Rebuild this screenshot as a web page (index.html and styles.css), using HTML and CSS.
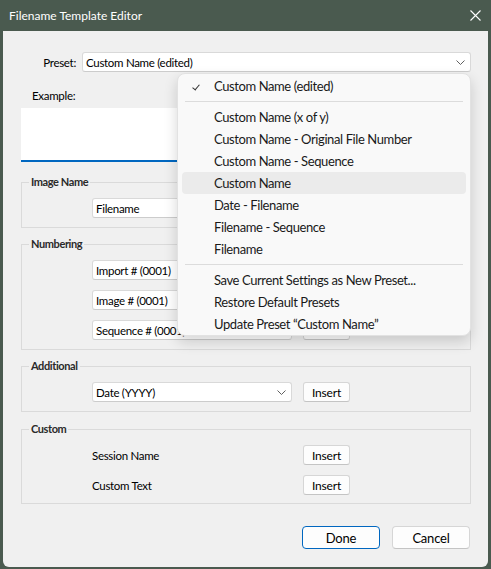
FILE: index.html
```html
<!DOCTYPE html>
<html lang="en">
<head>
    <meta charset="UTF-8">
    <title>Filename Template Editor</title>
    <link rel="stylesheet" href="styles.css">
</head>
<body>
    <div class="window">
        <div class="titlebar">
            <span class="title">Filename Template Editor</span>
            <svg class="close" width="11" height="11" viewBox="0 0 11 11">
                <path d="M0.5 0.5 L10.5 10.5 M10.5 0.5 L0.5 10.5" stroke="#ffffff" stroke-width="1.1" fill="none"/>
            </svg>
        </div>

        <div class="client">
            <div class="content">
                <div class="preset-row">
                    <label class="preset-label">Preset:</label>
                    <div class="combo combo-wide">
                        <span>Custom Name (edited)</span>
                        <svg class="chev" width="9" height="5" viewBox="0 0 9 5"><path d="M0.5 0.5 L4.5 4.5 L8.5 0.5" stroke="#606060" fill="none"/></svg>
                    </div>
                </div>

                <div class="example-label">Example:</div>
                <div class="example-box"></div>

                <div class="group group-first">
                    <span class="group-title">Image Name</span>
                    <div class="row">
                        <div class="combo"><span>Filename</span><svg class="chev" width="9" height="5" viewBox="0 0 9 5"><path d="M0.5 0.5 L4.5 4.5 L8.5 0.5" stroke="#606060" fill="none"/></svg></div>
                        <button class="btn">Insert</button>
                    </div>
                </div>

                <div class="group">
                    <span class="group-title">Numbering</span>
                    <div class="row">
                        <div class="combo"><span>Import # (0001)</span><svg class="chev" width="9" height="5" viewBox="0 0 9 5"><path d="M0.5 0.5 L4.5 4.5 L8.5 0.5" stroke="#606060" fill="none"/></svg></div>
                        <button class="btn">Insert</button>
                    </div>
                    <div class="row">
                        <div class="combo"><span>Image # (0001)</span><svg class="chev" width="9" height="5" viewBox="0 0 9 5"><path d="M0.5 0.5 L4.5 4.5 L8.5 0.5" stroke="#606060" fill="none"/></svg></div>
                        <button class="btn">Insert</button>
                    </div>
                    <div class="row">
                        <div class="combo"><span>Sequence # (0001)</span><svg class="chev" width="9" height="5" viewBox="0 0 9 5"><path d="M0.5 0.5 L4.5 4.5 L8.5 0.5" stroke="#606060" fill="none"/></svg></div>
                        <button class="btn">Insert</button>
                    </div>
                </div>

                <div class="group">
                    <span class="group-title">Additional</span>
                    <div class="row">
                        <div class="combo"><span>Date (YYYY)</span><svg class="chev" width="9" height="5" viewBox="0 0 9 5"><path d="M0.5 0.5 L4.5 4.5 L8.5 0.5" stroke="#606060" fill="none"/></svg></div>
                        <button class="btn">Insert</button>
                    </div>
                </div>

                <div class="group group-custom">
                    <span class="group-title">Custom</span>
                    <div class="row">
                        <span class="row-label">Session Name</span>
                        <button class="btn">Insert</button>
                    </div>
                    <div class="row">
                        <span class="row-label">Custom Text</span>
                        <button class="btn">Insert</button>
                    </div>
                </div>

                <div class="actions">
                    <button class="btn btn-action btn-default">Done</button>
                    <button class="btn btn-action">Cancel</button>
                </div>
            </div>

            <div class="dropdown">
                <div class="menu-item checked">Custom Name (edited)</div>
                <div class="menu-sep"></div>
                <div class="menu-item">Custom Name (x of y)</div>
                <div class="menu-item">Custom Name - Original File Number</div>
                <div class="menu-item">Custom Name - Sequence</div>
                <div class="menu-item hover">Custom Name</div>
                <div class="menu-item">Date - Filename</div>
                <div class="menu-item">Filename - Sequence</div>
                <div class="menu-item">Filename</div>
                <div class="menu-sep"></div>
                <div class="menu-item">Save Current Settings as New Preset...</div>
                <div class="menu-item">Restore Default Presets</div>
                <div class="menu-item">Update Preset “Custom Name”</div>
            </div>
        </div>
    </div>
</body>
</html>
```

FILE: styles.css
```css
/* Filename Template Editor dialog */
:root {
    --frame-color: #4a5a4f;
    --client-bg: #f0f0f0;
    --line-color: #dadada;
    --accent: #0067c0;
    --text: #000000;
}

* {
    margin: 0;
    padding: 0;
    box-sizing: border-box;
}

body {
    background-color: var(--frame-color);
    font-family: Lato, "Noto Sans", sans-serif;
    font-size: 11.5px;
    letter-spacing: -0.3px;
    color: var(--text);
}

.window {
    width: 491px;
    height: 569px;
    background-color: var(--frame-color);
    display: flex;
    flex-direction: column;
}

.titlebar {
    height: 31px;
    display: flex;
    align-items: center;
    justify-content: space-between;
    padding: 0 10px 0 9px;
    color: #ffffff;
}

.title {
    font-size: 12px;
    letter-spacing: 0;
}

.client {
    flex: 1;
    margin: 0 3px 2px 3px;
    background-color: var(--client-bg);
    border-radius: 0 0 6px 6px;
    position: relative;
}

.content {
    padding: 21px 17px 0 18px;
}

.preset-row {
    display: flex;
    align-items: center;
    gap: 6px;
}

.preset-label {
    width: 55px;
    text-align: right;
}

.combo {
    width: 200px;
    height: 20px;
    background-color: #ffffff;
    border: 1px solid #d9d9d9;
    border-bottom-color: #cccccc;
    border-radius: 3px;
    display: flex;
    align-items: center;
    justify-content: space-between;
    padding: 0 5px 0 3px;
    white-space: nowrap;
    overflow: hidden;
}

.combo-wide {
    width: 389px;
}

.chev {
    flex-shrink: 0;
}

.example-label {
    margin-top: 16px;
    padding-left: 11px;
    line-height: 16px;
}

.example-box {
    margin-top: 4px;
    height: 54px;
    background-color: #ffffff;
    border-bottom: 2px solid var(--accent);
}

.group {
    position: relative;
    margin-top: 16px;
    border: 1px solid var(--line-color);
    padding: 15px 0 9px 70px;
    display: flex;
    flex-direction: column;
    gap: 10px;
}

.group-first {
    margin-top: 20px;
}

.group-custom {
    margin-top: 17px;
    padding-bottom: 8px;
}

/* title sits over the top border line */
.group-title {
    position: absolute;
    top: -7px;
    left: 7px;
    padding: 0 2px;
    background-color: var(--client-bg);
    font-size: 11px;
    line-height: 12px;
    font-weight: 700;
    letter-spacing: -0.4px;
    color: #2a2a2a;
}

.row {
    display: flex;
    align-items: center;
    gap: 11px;
    height: 20px;
}

.row-label {
    width: 200px;
}

.btn {
    width: 47px;
    height: 20px;
    font-family: inherit;
    font-size: 12px;
    letter-spacing: -0.2px;
    color: var(--text);
    background-color: #fdfdfd;
    border: 1px solid #d6d6d6;
    border-bottom-color: #c4c4c4;
    border-radius: 3px;
}

.actions {
    margin-top: 22px;
    display: flex;
    justify-content: flex-end;
    gap: 12px;
    padding-right: 1px;
}

.btn-action {
    width: 78px;
    height: 23px;
    font-size: 13px;
    border-radius: 4px;
}

.btn-default {
    border: 1px solid var(--accent);
}

/* open preset list */
.dropdown {
    position: absolute;
    left: 174px;
    top: 42px;
    width: 294px;
    padding: 1px 0 0 0;
    background-color: #f9f9f9;
    border: 1px solid #e2e2e2;
    border-radius: 8px;
    box-shadow: 0 6px 14px rgba(0, 0, 0, 0.16);
}

.menu-item {
    height: 22px;
    line-height: 22px;
    margin: 0 4px;
    padding-left: 32px;
    font-size: 13px;
    letter-spacing: -0.4px;
    color: #1a1a1a;
    border-radius: 4px;
    position: relative;
    white-space: nowrap;
}

.menu-item.hover {
    background-color: #ebebeb;
}

.menu-item.checked::before {
    content: "";
    position: absolute;
    left: 12px;
    top: 8px;
    width: 3px;
    height: 6px;
    border-right: 1px solid #333333;
    border-bottom: 1px solid #333333;
    transform: rotate(40deg);
}

.menu-sep {
    height: 1px;
    margin: 4px 7px;
    background-color: #dcdcdc;
}
```
